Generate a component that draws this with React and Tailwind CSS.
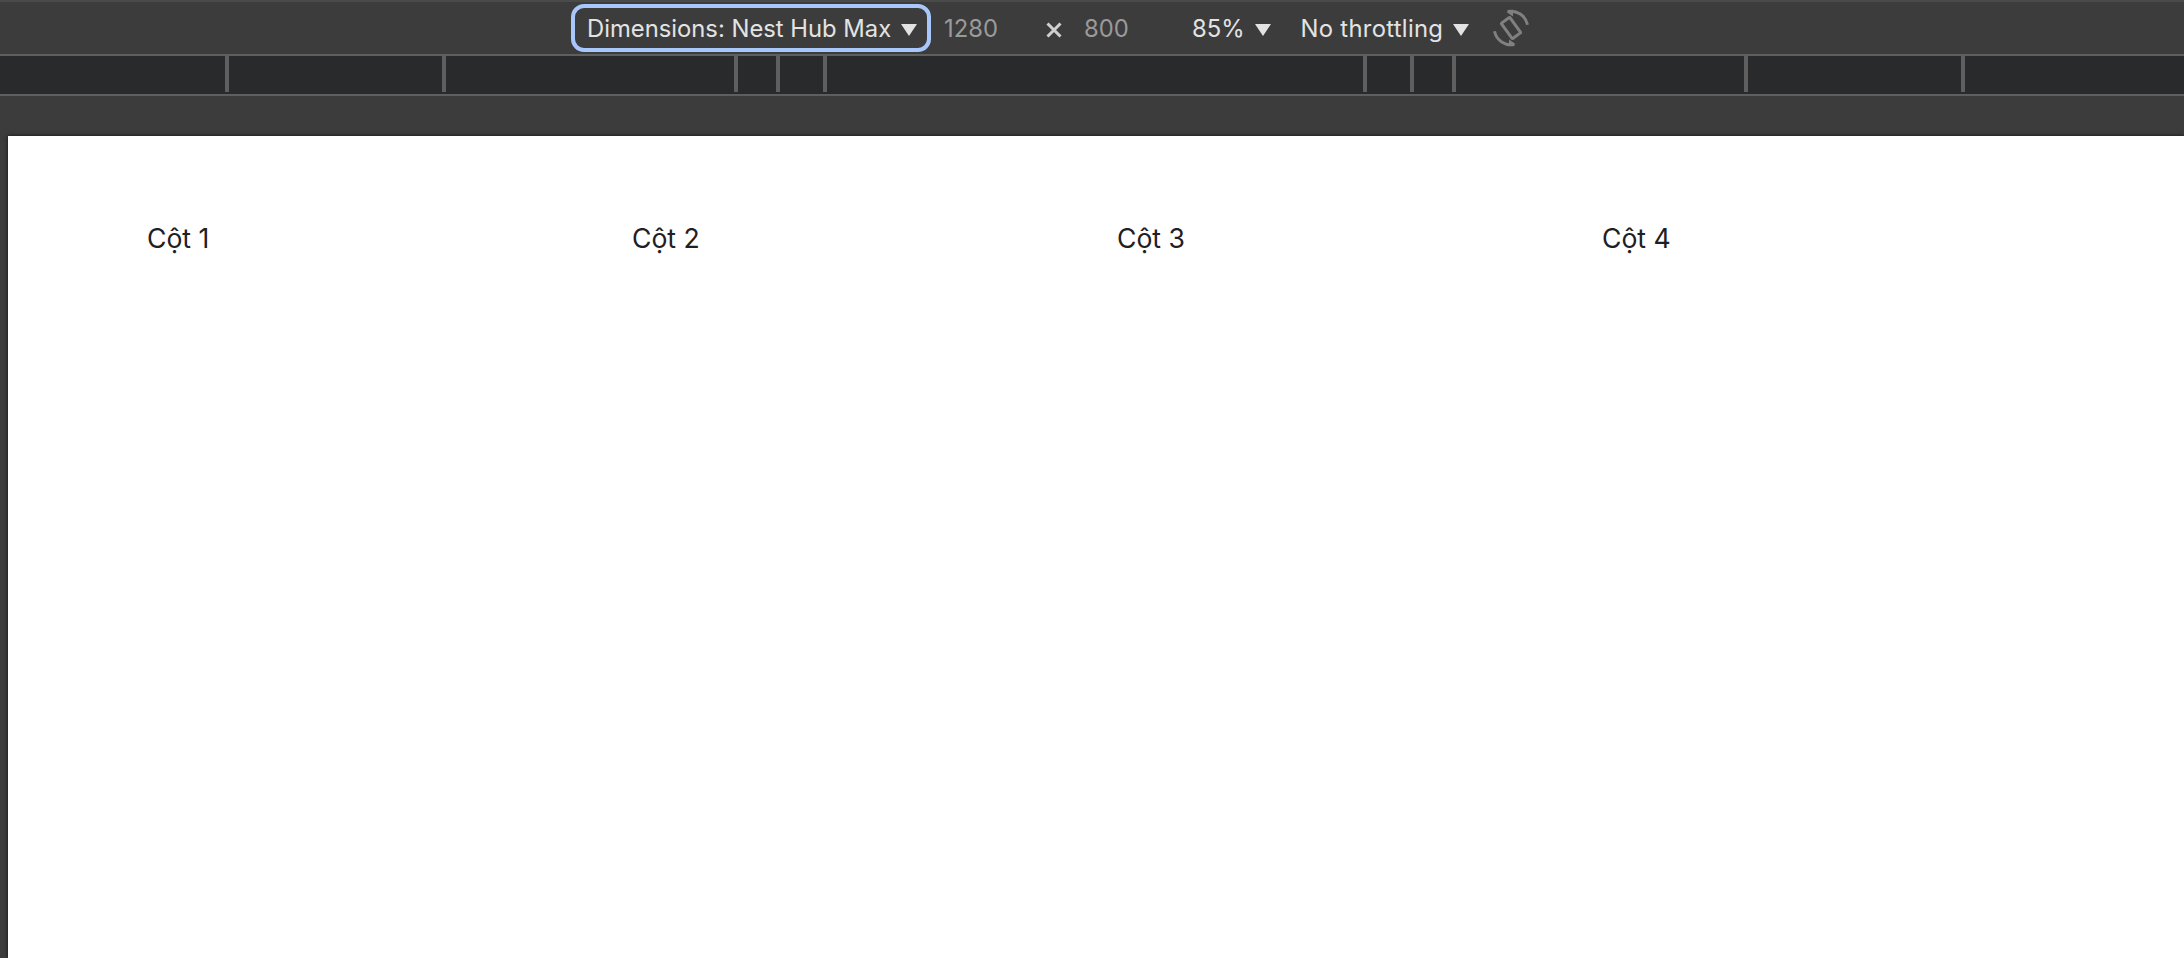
import React from 'react';

const font = { fontFamily: 'Inter, "Noto Sans", sans-serif' };

function Caret({ className = '' }) {
  return (
    <span className={`w-0 h-0 mt-[4px] border-l-[8px] border-l-transparent border-r-[8px] border-r-transparent border-t-[12px] border-t-[#e3e3e3] ${className}`}></span>
  );
}

function RotateIcon() {
  return (
    <svg width="38" height="38" viewBox="0 0 38 38" fill="none" className="ml-[23px]">
      <g stroke="#808080" strokeWidth="3">
        <rect x="13.7" y="9.5" width="10.6" height="19" rx="1" transform="rotate(-36 19 19)" />
        <path d="M15.7 2.5A17 17 0 0 1 35.5 15.7" />
        <path d="M2.5 22.3A17 17 0 0 0 22.3 35.5" />
      </g>
      <path d="M21 0.5L21 7.5L14.5 3Z" fill="#808080" />
      <path d="M17 37.5L17 30.5L23.5 35Z" fill="#808080" />
    </svg>
  );
}

function Tick({ ml }) {
  return <div className={`w-[4px] h-[36px] bg-[#5f5f5f] shrink-0 ${ml}`}></div>;
}

export default function App() {
  return (
    <div className="h-screen overflow-hidden bg-[#3c3c3c] flex flex-col" style={font}>
      {/* toolbar */}
      <div className="h-[54px] shrink-0 border-t-2 border-[#4a4a4a] pl-[571px] flex items-center text-[23.8px] text-[#e3e3e3]">
        <div className="w-[360px] h-[48px] rounded-[13px] border-[4px] border-[#a8c7fa] pl-[12px] flex items-center shrink-0">
          <span className="w-[314px] whitespace-nowrap mt-[1px]">Dimensions: Nest Hub Max</span>
          <Caret />
        </div>
        <span className="ml-[13px] w-[54px] text-[#9a9a9a] mt-[1px]">1280</span>
        <svg width="16" height="16" viewBox="0 0 16 16" className="ml-[48px] mt-[4px]">
          <path d="M1.5 1.5L14.5 14.5M14.5 1.5L1.5 14.5" stroke="#d0d0d0" strokeWidth="3" />
        </svg>
        <span className="ml-[22px] w-[44px] text-[#9a9a9a] mt-[1px]">800</span>
        <span className="ml-[64px] whitespace-nowrap mt-[1px]">85%</span>
        <Caret className="ml-[10px]" />
        <span className="ml-[30px] whitespace-nowrap mt-[1px] tracking-[0.3px]">No throttling</span>
        <Caret className="ml-[10px]" />
        <RotateIcon />
      </div>

      {/* media query ruler */}
      <div className="h-[42px] shrink-0 bg-[#292a2c] border-y-2 border-[#5f5f5f] flex items-start">
        <Tick ml="ml-[225px]" />
        <Tick ml="ml-[213px]" />
        <Tick ml="ml-[288px]" />
        <Tick ml="ml-[38px]" />
        <Tick ml="ml-[43px]" />
        <Tick ml="ml-[536px]" />
        <Tick ml="ml-[43px]" />
        <Tick ml="ml-[38px]" />
        <Tick ml="ml-[288px]" />
        <Tick ml="ml-[213px]" />
      </div>

      {/* device viewport */}
      <div className="flex-1 pt-[40px] pl-[8px]">
        <div className="h-full bg-white shadow-[0_0_4px_rgba(0,0,0,0.7)] grid grid-cols-[485px_485px_485px_485px] pl-[139px] pt-[87px] text-[26.6px] leading-[30px] text-[#1f2024] content-start">
          <div>Cột 1</div>
          <div>Cột 2</div>
          <div>Cột 3</div>
          <div>Cột 4</div>
        </div>
      </div>
    </div>
  );
}
